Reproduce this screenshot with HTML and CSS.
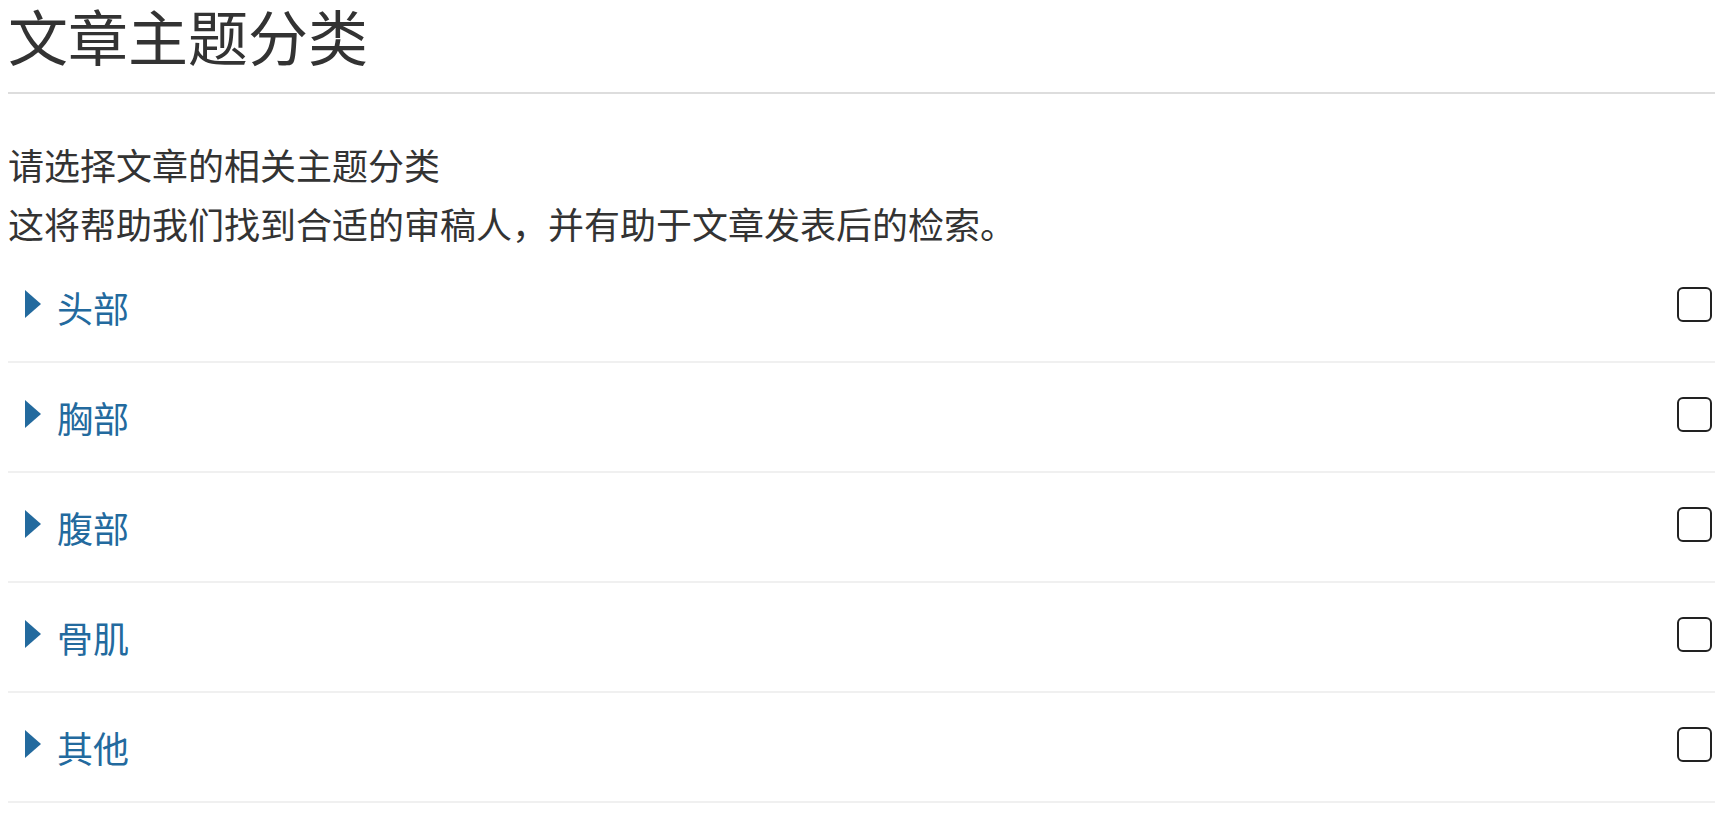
FILE: index.html
```html
<!DOCTYPE html>
<html lang="zh-CN">
<head>
    <meta charset="UTF-8">
    <title>文章主题分类</title>
    <link rel="stylesheet" href="styles.css">
</head>
<body>

    <div class="page">
        <h1 class="title">文章主题分类</h1>

        <div class="intro">
            <p>请选择文章的相关主题分类</p>
            <p>这将帮助我们找到合适的审稿人，并有助于文章发表后的检索。</p>
        </div>

        <ul class="topics">
            <li class="topic">
                <a class="topic-toggle" href="#"><span class="caret"></span>头部</a>
                <input type="checkbox" class="topic-check">
            </li>
            <li class="topic">
                <a class="topic-toggle" href="#"><span class="caret"></span>胸部</a>
                <input type="checkbox" class="topic-check">
            </li>
            <li class="topic">
                <a class="topic-toggle" href="#"><span class="caret"></span>腹部</a>
                <input type="checkbox" class="topic-check">
            </li>
            <li class="topic">
                <a class="topic-toggle" href="#"><span class="caret"></span>骨肌</a>
                <input type="checkbox" class="topic-check">
            </li>
            <li class="topic">
                <a class="topic-toggle" href="#"><span class="caret"></span>其他</a>
                <input type="checkbox" class="topic-check">
            </li>
        </ul>
    </div>

</body>
</html>
```

FILE: styles.css
```css
/* General Styling */
body {
    font-family: 'Noto Sans CJK SC', 'Noto Sans', sans-serif;
    color: #333;
    background: #fff;
    margin: 0;
    padding: 0 19px 0 8px;
}
.title {
    font-size: 60px;
    font-weight: normal;
    line-height: 70px;
    margin: 0;
    padding-bottom: 22px;
    border-bottom: 2px solid #ddd;
}
.intro {
    margin-top: 41px;
}
.intro p {
    font-size: 36px;
    line-height: 59px;
    margin: 0;
}
.topics {
    list-style: none;
    margin: 0;
    padding: 0;
}
.topic {
    display: flex;
    align-items: center;
    justify-content: space-between;
    height: 108px;
    border-bottom: 2px solid #f0f0f0;
}
.topic-toggle {
    display: flex;
    align-items: center;
    font-size: 36px;
    color: #236a9e;
    text-decoration: none;
    padding-left: 17px;
}
.caret {
    width: 0;
    height: 0;
    border-top: 14px solid transparent;
    border-bottom: 14px solid transparent;
    border-left: 16px solid #236a9e;
    margin-right: 16px;
    margin-top: -6px;
}
.topic-check {
    appearance: none;
    width: 35px;
    height: 35px;
    margin: -6px 3px 0 0;
    border: 2px solid #222;
    border-radius: 6px;
    background: #fff;
}
```
